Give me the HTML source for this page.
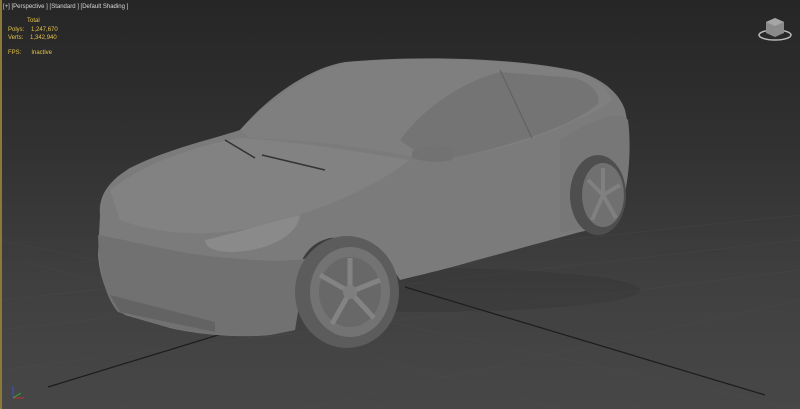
<!DOCTYPE html>
<html><head><style>
html,body{margin:0;padding:0}
body{width:800px;height:409px;overflow:hidden;position:relative;background:linear-gradient(#262626 0%,#313131 35%,#404040 70%,#474747 100%);font-family:"Liberation Sans",sans-serif}
.t{position:absolute;font-size:6px;color:#d8d8d8;white-space:pre}
.y{color:#e6c24a}
</style></head><body>
<svg width="800" height="409" style="position:absolute;left:0;top:0">
<g stroke="#555" stroke-width="0.5" opacity="0.35" fill="none">
<line x1="0" y1="300" x2="800" y2="215"/>
<line x1="0" y1="330" x2="800" y2="240"/>
<line x1="0" y1="370" x2="800" y2="270"/>
<line x1="20" y1="260" x2="560" y2="409"/>
<line x1="0" y1="240" x2="800" y2="409"/>
<line x1="300" y1="409" x2="800" y2="300"/>
</g>
<line x1="48" y1="387" x2="385" y2="284" stroke="#1c1c1c" stroke-width="1.2"/>
<line x1="405" y1="287" x2="765" y2="395" stroke="#1c1c1c" stroke-width="1.2"/>
<ellipse cx="420" cy="290" rx="220" ry="22" fill="#2a2a2a" opacity="0.2"/>
<path d="M100,215 C98,195 110,180 130,168 C170,148 210,140 240,130 C270,95 310,68 345,62 C420,55 520,58 580,72 C605,80 620,95 625,110 C632,140 630,175 622,205 C615,220 600,228 580,232 L470,262 C450,268 420,275 400,280 C385,255 360,235 330,238 C300,245 290,275 295,330 L270,335 C240,338 200,335 170,328 L125,315 C108,300 100,280 98,255 Z" fill="#7b7b7b"/>
<path d="M240,130 C275,95 315,68 350,62 C430,56 520,60 578,72 C598,78 610,92 612,100 C600,110 590,115 580,118 C520,150 450,160 420,158 C380,150 320,140 250,138 Z" fill="#7f7f7f"/>
<path d="M400,140 C430,100 470,80 500,72 L575,78 C595,85 600,95 598,104 C570,128 500,150 430,162 Z" fill="#747474"/>
<line x1="500" y1="70" x2="532" y2="138" stroke="#5e5e5e" stroke-width="1"/>
<path d="M110,190 C150,160 200,145 240,138 C300,142 360,152 410,160 C370,190 320,210 280,220 C220,240 160,235 120,220 Z" fill="#828282"/>
<path d="M98,235 C130,240 180,255 230,258 C270,262 300,262 320,255 L300,300 L295,330 L270,335 C230,338 190,333 160,325 L118,312 C104,295 99,270 98,235 Z" fill="#717171"/>
<path d="M110,295 L215,322 L215,332 L120,312 Z" fill="#636363"/>
<path d="M205,240 C240,232 270,222 300,215 C298,235 270,250 235,252 C215,252 205,248 205,240 Z" fill="#8a8a8a"/>
<path d="M225,140 L255,158 M262,155 L325,170" stroke="#333" stroke-width="1.6"/>
<path d="M412,152 C420,145 440,143 455,148 L452,160 C440,163 425,162 412,158 Z" fill="#727272"/>
<path d="M560,140 C590,120 620,110 628,120 C632,150 628,190 620,210 C600,225 580,230 560,232 Z" fill="#777"/>
<ellipse cx="347" cy="292" rx="52" ry="56" fill="#5c5c5c"/>
<ellipse cx="350" cy="292" rx="40" ry="45" fill="#737373"/>
<ellipse cx="350" cy="292" rx="31" ry="35" fill="#686868"/>
<g stroke="#838383" stroke-width="5">
<line x1="350" y1="292" x2="350" y2="258"/><line x1="350" y1="292" x2="380" y2="280"/><line x1="350" y1="292" x2="374" y2="318"/><line x1="350" y1="292" x2="332" y2="324"/><line x1="350" y1="292" x2="320" y2="275"/>
</g>
<circle cx="350" cy="292" r="7" fill="#7e7e7e"/>
<ellipse cx="598" cy="195" rx="28" ry="40" fill="#4e4e4e"/>
<ellipse cx="603" cy="195" rx="21" ry="32" fill="#707070"/>
<g stroke="#808080" stroke-width="4">
<line x1="603" y1="195" x2="603" y2="168"/><line x1="603" y1="195" x2="620" y2="185"/><line x1="603" y1="195" x2="616" y2="218"/><line x1="603" y1="195" x2="592" y2="220"/><line x1="603" y1="195" x2="588" y2="180"/>
</g>
<ellipse cx="775" cy="35" rx="16" ry="5" fill="none" stroke="#bbb" stroke-width="1.5"/>
<path d="M766,22 L775,18 L784,22 L784,33 L775,37 L766,33 Z" fill="#8a8a8a"/>
<path d="M766,22 L775,18 L784,22 L775,26 Z" fill="#a5a5a5"/>
<line x1="13" y1="398" x2="13" y2="386" stroke="#3a4fd0" stroke-width="1"/>
<line x1="13" y1="398" x2="24" y2="398" stroke="#c03030" stroke-width="1"/>
<line x1="13" y1="398" x2="21" y2="393" stroke="#30b030" stroke-width="1"/>
</svg>
<div style="position:absolute;left:0;top:0;width:2px;height:409px;background:#8a7a3a"></div>
<div class="t" style="left:3px;top:4px">[+] [Perspective ] [Standard ] [Default Shading ]</div>
<div class="t y" style="left:27px;top:18px">Total</div>
<div class="t y" style="left:8px;top:27px">Polys:    1,247,670</div>
<div class="t y" style="left:8px;top:35px">Verts:    1,342,940</div>
<div class="t y" style="left:8px;top:50px">FPS:      Inactive</div>
</body></html>
